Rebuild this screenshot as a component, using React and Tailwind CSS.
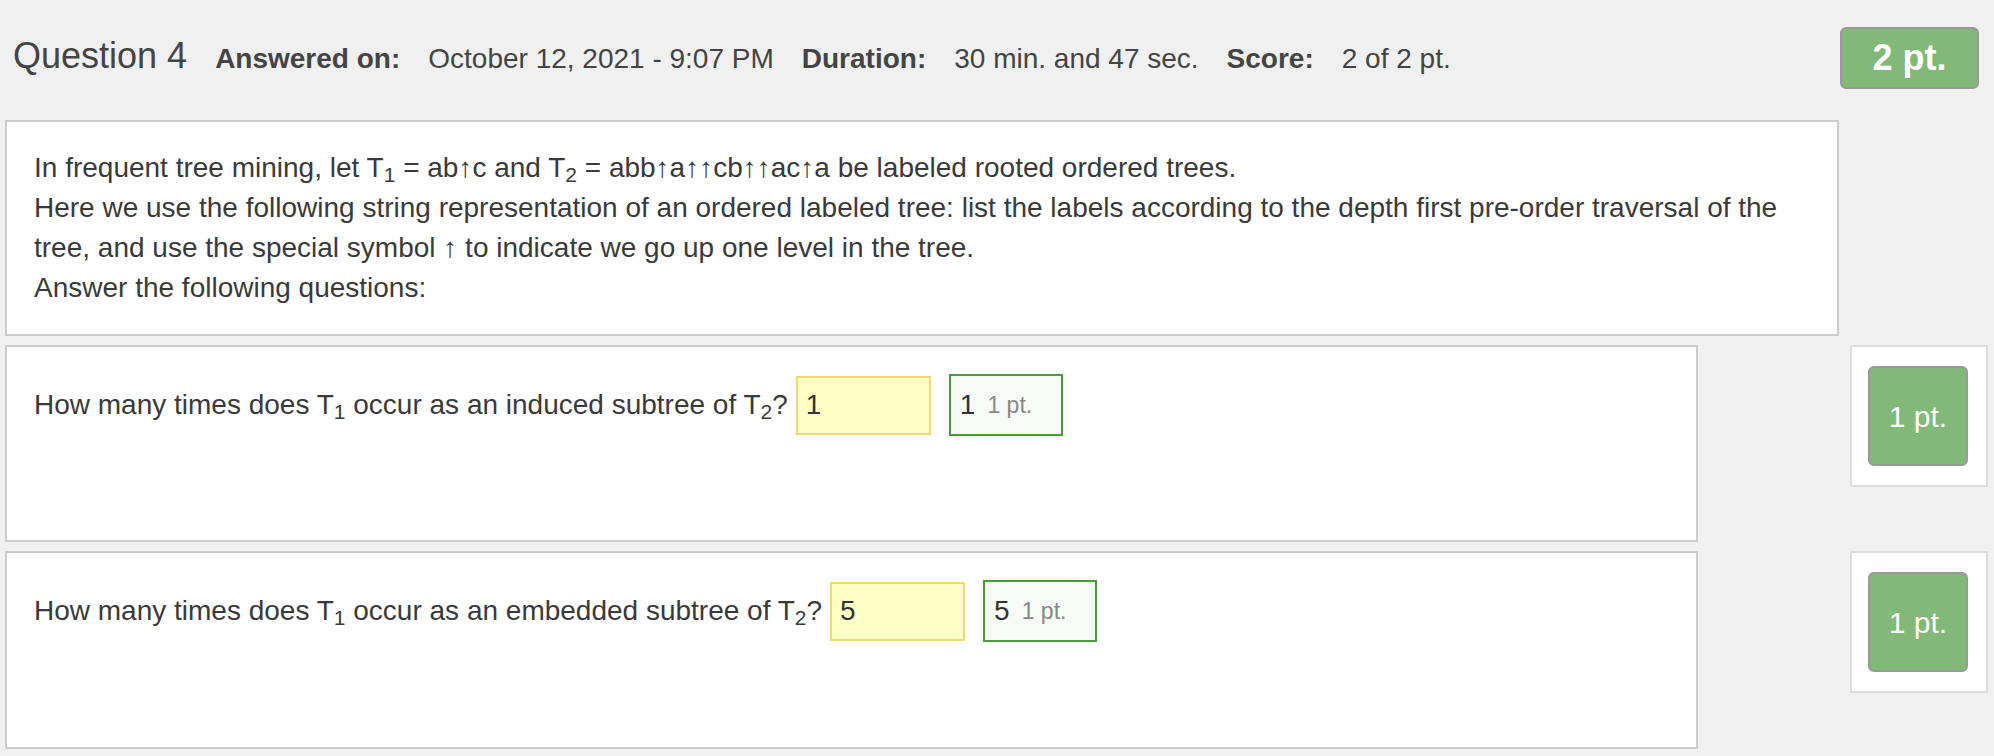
export default function App() {
  const font = "font-['Liberation_Sans','Helvetica','Arial',sans-serif]";
  const QRow = ({ kind, value, h }) => (
    <div className="mt-[9px] flex items-start">
      <div className={`w-[1693px] ${h} border-2 border-[#cccccc] bg-white px-[27px] pt-[27px]`}>
        <div className="flex items-center text-[28px] leading-[40px]">
          <span className="whitespace-nowrap">
            How many times does T<sub>1</sub> occur as an {kind} subtree of T<sub>2</sub>?
          </span>
          <div className="ml-[8px] flex h-[59px] w-[135px] items-center border-2 border-[#f0d878] bg-[#ffffc6] pl-[8px] text-[28px] text-[#333]">
            {value}
          </div>
          <div className="ml-[18px] flex h-[62px] w-[114px] items-center border-2 border-[#4b9b37] bg-[#f7fbf5] pl-[9px]">
            <span className="text-[28px] text-[#333]">{value}</span>
            <span className="ml-[12px] text-[23px] text-[#888]">1 pt.</span>
          </div>
        </div>
      </div>
      <div className="ml-[152px] flex h-[142px] w-[138px] items-center justify-center border-2 border-[#dddddd] bg-white pr-[2px]">
        <div className="flex h-[100px] w-[100px] items-center justify-center rounded-[6px] border-2 border-[#999999] bg-[#82b978] text-[30px] text-white">
          1 pt.
        </div>
      </div>
    </div>
  );

  return (
    <div className={`min-h-[756px] w-[1994px] bg-[#f0f0f0] pl-[5px] text-[#3a3a3a] ${font}`}>
      <div className="flex h-[120px] items-start">
        <div className="flex flex-1 items-baseline gap-[28px] pl-[8px] pt-[38px] whitespace-nowrap leading-none text-[#444]">
          <span className="text-[36px]">Question 4</span>
          <span className="text-[28px] font-bold">Answered on:</span>
          <span className="text-[28px]">October 12, 2021 - 9:07 PM</span>
          <span className="text-[28px] font-bold">Duration:</span>
          <span className="text-[28px]">30 min. and 47 sec.</span>
          <span className="text-[28px] font-bold">Score:</span>
          <span className="text-[28px]">2 of 2 pt.</span>
        </div>
        <div className="mr-[15px] mt-[27px] flex h-[62px] w-[139px] items-center justify-center rounded-[6px] border-2 border-[#999999] bg-[#82b978] text-[36px] font-bold text-white">
          2 pt.
        </div>
      </div>

      <div className="w-[1834px] border-2 border-[#cccccc] bg-white px-[27px] py-[26px] text-[28px] leading-[40px]">
        <div className="whitespace-nowrap">
          In frequent tree mining, let T<sub>1</sub> = ab↑c and T<sub>2</sub> = abb↑a↑↑cb↑↑ac↑a be labeled rooted ordered trees.
        </div>
        <div className="whitespace-nowrap">
          Here we use the following string representation of an ordered labeled tree: list the labels according to the depth first pre-order traversal of the
        </div>
        <div className="whitespace-nowrap">
          tree, and use the special symbol ↑ to indicate we go up one level in the tree.
        </div>
        <div className="whitespace-nowrap">Answer the following questions:</div>
      </div>

      <QRow kind="induced" value="1" h="h-[197px]" />
      <QRow kind="embedded" value="5" h="h-[198px]" />
    </div>
  );
}
